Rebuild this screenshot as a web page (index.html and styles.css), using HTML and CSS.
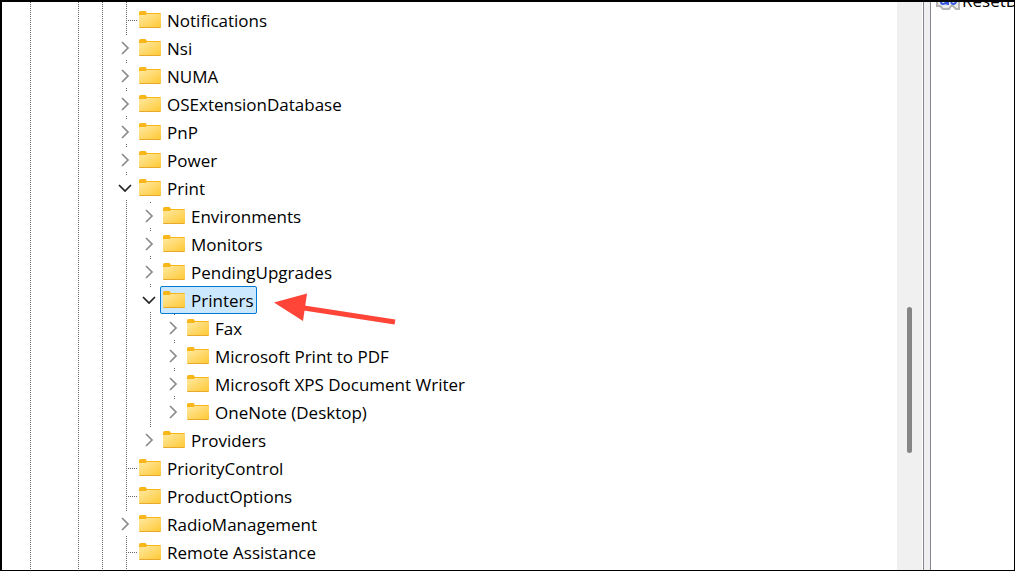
FILE: index.html
```html
<!DOCTYPE html>
<html lang="en">
<head>
    <meta charset="UTF-8">
    <meta name="viewport" content="width=device-width, initial-scale=1.0">
    <title>Registry Editor</title>
    <link rel="stylesheet" href="styles.css">
</head>
<body>
    <!-- Shared icons -->
    <svg class="icon-defs" aria-hidden="true">
        <defs>
            <linearGradient id="folder-fill" x1="0" y1="0" x2="1" y2="1">
                <stop offset="0" stop-color="#ffe9a2"/>
                <stop offset="1" stop-color="#ffc937"/>
            </linearGradient>
            <symbol id="folder" viewBox="0 0 22 18">
                <path d="M0 1.5Q0 0 1.5 0H6.500L8 2H21Q22 2 22 3V8H0Z" fill="#f9b618"/>
                <path d="M0 4H6.500L8 3H22V16H0Z" fill="url(#folder-fill)"/>
                <path d="M0 16H22Q22 17 21 17H1Q0 17 0 16Z" fill="#e9a92a"/>
            </symbol>
            <symbol id="chevron-right" viewBox="0 0 14 14">
                <path d="M4 1L10 7L4 13" fill="none" stroke="#8c8c8c" stroke-width="1.700"/>
            </symbol>
            <symbol id="chevron-down" viewBox="0 0 14 14">
                <path d="M1 4L7 10L13 4" fill="none" stroke="#222" stroke-width="1.700"/>
            </symbol>
        </defs>
    </svg>

    <div class="window">
        <nav class="tree-pane">
            <ul class="tree">
                <li><div class="row leaf"><span class="key"><svg class="folder"><use href="#folder"/></svg>Notifications</span></div></li>
                <li><div class="row"><button class="toggle" aria-label="Expand Nsi"><svg><use href="#chevron-right"/></svg></button><span class="key"><svg class="folder"><use href="#folder"/></svg>Nsi</span></div></li>
                <li><div class="row"><button class="toggle" aria-label="Expand NUMA"><svg><use href="#chevron-right"/></svg></button><span class="key"><svg class="folder"><use href="#folder"/></svg>NUMA</span></div></li>
                <li><div class="row"><button class="toggle" aria-label="Expand OSExtensionDatabase"><svg><use href="#chevron-right"/></svg></button><span class="key"><svg class="folder"><use href="#folder"/></svg>OSExtensionDatabase</span></div></li>
                <li><div class="row"><button class="toggle" aria-label="Expand PnP"><svg><use href="#chevron-right"/></svg></button><span class="key"><svg class="folder"><use href="#folder"/></svg>PnP</span></div></li>
                <li><div class="row"><button class="toggle" aria-label="Expand Power"><svg><use href="#chevron-right"/></svg></button><span class="key"><svg class="folder"><use href="#folder"/></svg>Power</span></div></li>
                <li>
                    <div class="row"><button class="toggle" aria-label="Collapse Print"><svg><use href="#chevron-down"/></svg></button><span class="key"><svg class="folder"><use href="#folder"/></svg>Print</span></div>
                    <ul class="branch">
                        <li><div class="row"><button class="toggle" aria-label="Expand Environments"><svg><use href="#chevron-right"/></svg></button><span class="key"><svg class="folder"><use href="#folder"/></svg>Environments</span></div></li>
                        <li><div class="row"><button class="toggle" aria-label="Expand Monitors"><svg><use href="#chevron-right"/></svg></button><span class="key"><svg class="folder"><use href="#folder"/></svg>Monitors</span></div></li>
                        <li><div class="row"><button class="toggle" aria-label="Expand PendingUpgrades"><svg><use href="#chevron-right"/></svg></button><span class="key"><svg class="folder"><use href="#folder"/></svg>PendingUpgrades</span></div></li>
                        <li>
                            <div class="row">
                                <button class="toggle" aria-label="Collapse Printers"><svg><use href="#chevron-down"/></svg></button>
                                <span class="key selected"><svg class="folder"><use href="#folder"/></svg>Printers</span>
                                <svg class="arrow" viewBox="0 0 124 34" aria-hidden="true">
                                    <path d="M30 15L121 29" stroke="#ff4438" stroke-width="5"/>
                                    <path d="M0 9.500L33 0.500L29 28Z" fill="#ff4438"/>
                                </svg>
                            </div>
                            <ul class="branch">
                                <li><div class="row"><button class="toggle" aria-label="Expand Fax"><svg><use href="#chevron-right"/></svg></button><span class="key"><svg class="folder"><use href="#folder"/></svg>Fax</span></div></li>
                                <li><div class="row"><button class="toggle" aria-label="Expand Microsoft Print to PDF"><svg><use href="#chevron-right"/></svg></button><span class="key"><svg class="folder"><use href="#folder"/></svg>Microsoft Print to PDF</span></div></li>
                                <li><div class="row"><button class="toggle" aria-label="Expand Microsoft XPS Document Writer"><svg><use href="#chevron-right"/></svg></button><span class="key"><svg class="folder"><use href="#folder"/></svg>Microsoft XPS Document Writer</span></div></li>
                                <li><div class="row"><button class="toggle" aria-label="Expand OneNote (Desktop)"><svg><use href="#chevron-right"/></svg></button><span class="key"><svg class="folder"><use href="#folder"/></svg>OneNote (Desktop)</span></div></li>
                            </ul>
                        </li>
                        <li><div class="row"><button class="toggle" aria-label="Expand Providers"><svg><use href="#chevron-right"/></svg></button><span class="key"><svg class="folder"><use href="#folder"/></svg>Providers</span></div></li>
                    </ul>
                </li>
                <li><div class="row leaf"><span class="key"><svg class="folder"><use href="#folder"/></svg>PriorityControl</span></div></li>
                <li><div class="row leaf"><span class="key"><svg class="folder"><use href="#folder"/></svg>ProductOptions</span></div></li>
                <li><div class="row"><button class="toggle" aria-label="Expand RadioManagement"><svg><use href="#chevron-right"/></svg></button><span class="key"><svg class="folder"><use href="#folder"/></svg>RadioManagement</span></div></li>
                <li><div class="row leaf"><span class="key"><svg class="folder"><use href="#folder"/></svg>Remote Assistance</span></div></li>
            </ul>
        </nav>

        <div class="scrollbar">
            <div class="thumb"></div>
        </div>
        <div class="splitter"></div>

        <main class="values-pane">
            <div class="value">
                <svg class="value-icon" viewBox="0 0 24 24" aria-hidden="true">
                    <path d="M1 2H23V20H20L17 17H15L13 20H7L4 17H1Z" fill="#ececec" stroke="#b4b4b4" stroke-width="2"/>
                    <path d="M5 7V13Q5 15 7 15T10 13V7M10 13Q10 15 12 15V7M16 7Q14 15 17 15T20 12V7" fill="none" stroke="#3558e0" stroke-width="2"/>
                </svg>
                <span>ResetD</span>
            </div>
        </main>
    </div>
</body>
</html>
```

FILE: styles.css
```css
* {
    margin: 0;
    padding: 0;
    box-sizing: border-box;
}

body {
    font-family: 'Segoe UI', 'Open Sans', sans-serif;
    font-size: 17px;
    line-height: 24px;
    color: #000;
    background: #fff;
}

.icon-defs {
    position: absolute;
    width: 0;
    height: 0;
}

.window {
    display: flex;
    height: 100vh;
    border: solid #000;
    border-width: 2px 1px 1px 2px;
    overflow: hidden;
}

/* Dotted guides for the ancestor levels scrolled off the top */
.tree-pane {
    --dots: repeating-linear-gradient(#666 0 1px, transparent 1px 2px);
    flex: 1;
    min-width: 0;
    overflow: hidden;
    padding-left: 112px;
    background-image: var(--dots), var(--dots), var(--dots);
    background-position: 28px 0, 76px 0, 100px 0;
    background-size: 1px 100%;
    background-repeat: no-repeat;
}

ul {
    list-style: none;
}

.tree {
    min-height: 100%;
    padding-top: 4px;
    background: var(--dots) 12px 0 / 1px 100% no-repeat;
}

.branch {
    padding-left: 24px;
}

.branch > li {
    background: var(--dots) 12px 0 / 1px 100% no-repeat;
}

.branch > li:last-child {
    background-size: 1px 2px;
}

.row {
    position: relative;
    display: flex;
    align-items: center;
    height: 28px;
}

/* Keys without subkeys get a short dotted connector */
.leaf {
    padding-left: 22px;
    background: repeating-linear-gradient(90deg, #666 0 1px, transparent 1px 2px) 12px 14px / 11px 1px no-repeat;
}

.toggle {
    display: flex;
    align-items: center;
    justify-content: center;
    width: 22px;
    height: 24px;
    border: none;
    background: #fff;
    cursor: pointer;
}

.toggle svg {
    width: 14px;
    height: 14px;
}

.key {
    display: flex;
    align-items: center;
    gap: 6px;
    height: 28px;
    padding: 2px 2px 0 2px;
    border: 1px solid transparent;
    border-radius: 2px;
    white-space: nowrap;
}

.key.selected {
    background: #cce8ff;
    border-color: #0078d4;
}

.folder {
    width: 22px;
    height: 18px;
    margin-bottom: 2px;
}

.arrow {
    position: absolute;
    left: 136px;
    top: 7px;
    width: 124px;
    height: 34px;
}

.scrollbar {
    width: 25px;
    background: #f0f0f0;
}

.thumb {
    width: 5px;
    height: 146px;
    margin: 305px auto 0;
    border-radius: 3px;
    background: #858585;
}

.splitter {
    width: 8px;
    margin-left: 1px;
    border: solid #828790;
    border-width: 0 1px;
    background: #f0f0f0;
}

.values-pane {
    width: 83px;
    overflow: hidden;
}

.value {
    display: flex;
    align-items: center;
    gap: 2px;
    height: 28px;
    margin-top: -15px;
    padding-left: 5px;
    white-space: nowrap;
}

.value-icon {
    flex: none;
    width: 24px;
    height: 24px;
}
```
